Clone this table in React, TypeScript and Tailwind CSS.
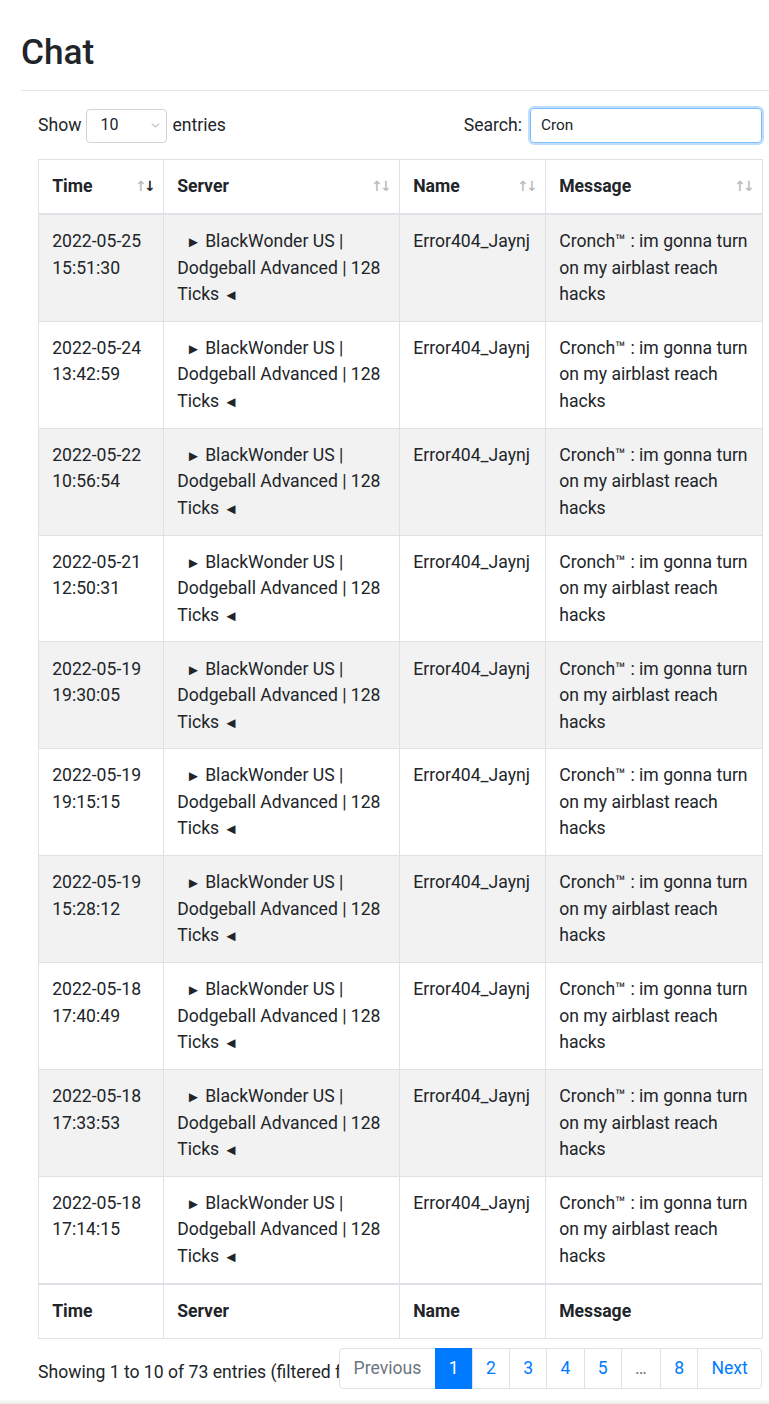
import { ChevronDown } from "lucide-react";

type ChatRow = {
    time: string;
    name: string;
    message: string;
};

const MSG = "Cronch™ : im gonna turn on my airblast reach hacks";

const times = [
    "2022-05-25 15:51:30",
    "2022-05-24 13:42:59",
    "2022-05-22 10:56:54",
    "2022-05-21 12:50:31",
    "2022-05-19 19:30:05",
    "2022-05-19 19:15:15",
    "2022-05-19 15:28:12",
    "2022-05-18 17:40:49",
    "2022-05-18 17:33:53",
    "2022-05-18 17:14:15",
];

const rows: ChatRow[] = times.map((t) => ({
    time: t,
    name: "Error404_Jaynj",
    message: MSG,
}));

const columns = ["Time", "Server", "Name", "Message"];

function ServerName() {
    return (
        <>
            {"\u00a0\u00a0"}
            <span className="text-[15px] leading-none">►</span> BlackWonder US | Dodgeball Advanced | 128 Ticks{" "}
            <span className="text-[15px] leading-none">◄</span>
        </>
    );
}

function SortIcon({ active }: { active: boolean }) {
    return (
        <span className="absolute right-[10px] top-[14px] flex font-['DejaVu_Sans',sans-serif] text-[14px] leading-[24px] text-[#212529]">
            <span className="w-[9px] text-center opacity-30">↑</span>
            <span className={active ? "w-[9px] text-center opacity-100" : "w-[9px] text-center opacity-30"}>↓</span>
        </span>
    );
}

function Pagination() {
    const pages = ["1", "2", "3", "4", "5", "…", "8"];
    return (
        <ul className="flex shrink-0 text-[17.6px] leading-[22px]">
            <li className="rounded-l-[4px] border border-[#dee2e6] bg-white px-[13.2px] py-[8.8px] text-[#6c757d]">
                Previous
            </li>
            {pages.map((p) => (
                <li
                    key={p}
                    className={
                        p === "1"
                            ? "-ml-px border border-[#007bff] bg-[#007bff] px-[13.2px] py-[8.8px] text-white"
                            : p === "…"
                              ? "-ml-px border border-[#dee2e6] bg-white px-[13.2px] py-[8.8px] text-[#6c757d]"
                              : "-ml-px border border-[#dee2e6] bg-white px-[13.2px] py-[8.8px] text-[#007bff]"
                    }
                >
                    {p}
                </li>
            ))}
            <li className="-ml-px rounded-r-[4px] border border-[#dee2e6] bg-white px-[13.2px] py-[8.8px] text-[#007bff]">
                Next
            </li>
        </ul>
    );
}

export default function App() {
    return (
        <div className="w-[769px] overflow-hidden bg-white font-['Roboto',sans-serif] text-[17.6px] leading-[26.5px] text-[#212529]">
            <div className="pl-[21px]">
                <h2 className="pt-[31px] text-[35.2px] font-medium leading-[42px]">Chat</h2>
                <hr className="mt-[17px] border-t border-[#e5e5e5]" />
            </div>

            <div className="ml-[38px] w-[724px]">
                <div className="mt-[17px] flex h-[35px] items-center justify-between">
                    <label className="flex items-center">
                        Show
                        <span className="mx-[5px] flex h-[34px] w-[81px] items-center justify-between rounded-[4px] border border-[#ced4da] pl-[13px] pr-[4px] text-[16px]">
                            10
                            <ChevronDown className="h-[13px] w-[13px] text-[#6c757d]" strokeWidth={1.3} />
                        </span>
                        entries
                    </label>
                    <label className="flex items-center">
                        Search:
                        <span className="ml-[8px] flex h-[35px] w-[232px] items-center rounded-[4px] border border-[#80bdff] px-[10px] text-[15.4px] shadow-[0_0_0_2px_rgba(0,123,255,0.25)]">
                            Cron
                        </span>
                    </label>
                </div>

                <table className="mt-[16px] w-[724px] table-fixed border-collapse border border-[#dee2e6]">
                    <colgroup>
                        <col className="w-[125px]" />
                        <col className="w-[236px]" />
                        <col className="w-[146px]" />
                        <col className="w-[217px]" />
                    </colgroup>
                    <thead>
                        <tr>
                            {columns.map((c, i) => (
                                <th
                                    key={c}
                                    className="relative border border-b-2 border-[#dee2e6] p-[13.2px] text-left align-top font-bold"
                                >
                                    {c}
                                    <SortIcon active={i === 0} />
                                </th>
                            ))}
                        </tr>
                    </thead>
                    <tbody>
                        {rows.map((r, i) => (
                            <tr key={r.time} className={i % 2 === 0 ? "bg-[#f2f2f2]" : "bg-white"}>
                                <td className="border border-[#dee2e6] p-[13.2px] align-top">{r.time}</td>
                                <td className="border border-[#dee2e6] p-[13.2px] align-top">
                                    <ServerName />
                                </td>
                                <td className="border border-[#dee2e6] p-[13.2px] align-top">{r.name}</td>
                                <td className="border border-[#dee2e6] p-[13.2px] align-top">{r.message}</td>
                            </tr>
                        ))}
                    </tbody>
                    <tfoot>
                        <tr>
                            {columns.map((c) => (
                                <th key={c} className="border border-t-2 border-[#dee2e6] p-[13.2px] text-left font-bold">
                                    {c}
                                </th>
                            ))}
                        </tr>
                    </tfoot>
                </table>

                <div className="mt-[9px] flex items-start justify-between">
                    <div className="min-w-0 whitespace-nowrap pt-[11px]">
                        Showing 1 to 10 of 73 entries (filtered from 2,412 total entries)
                    </div>
                    <Pagination />
                </div>
            </div>

            <div className="mt-[10px] h-[7px] bg-gradient-to-b from-white to-[#e4e4e4]" />
        </div>
    );
}
